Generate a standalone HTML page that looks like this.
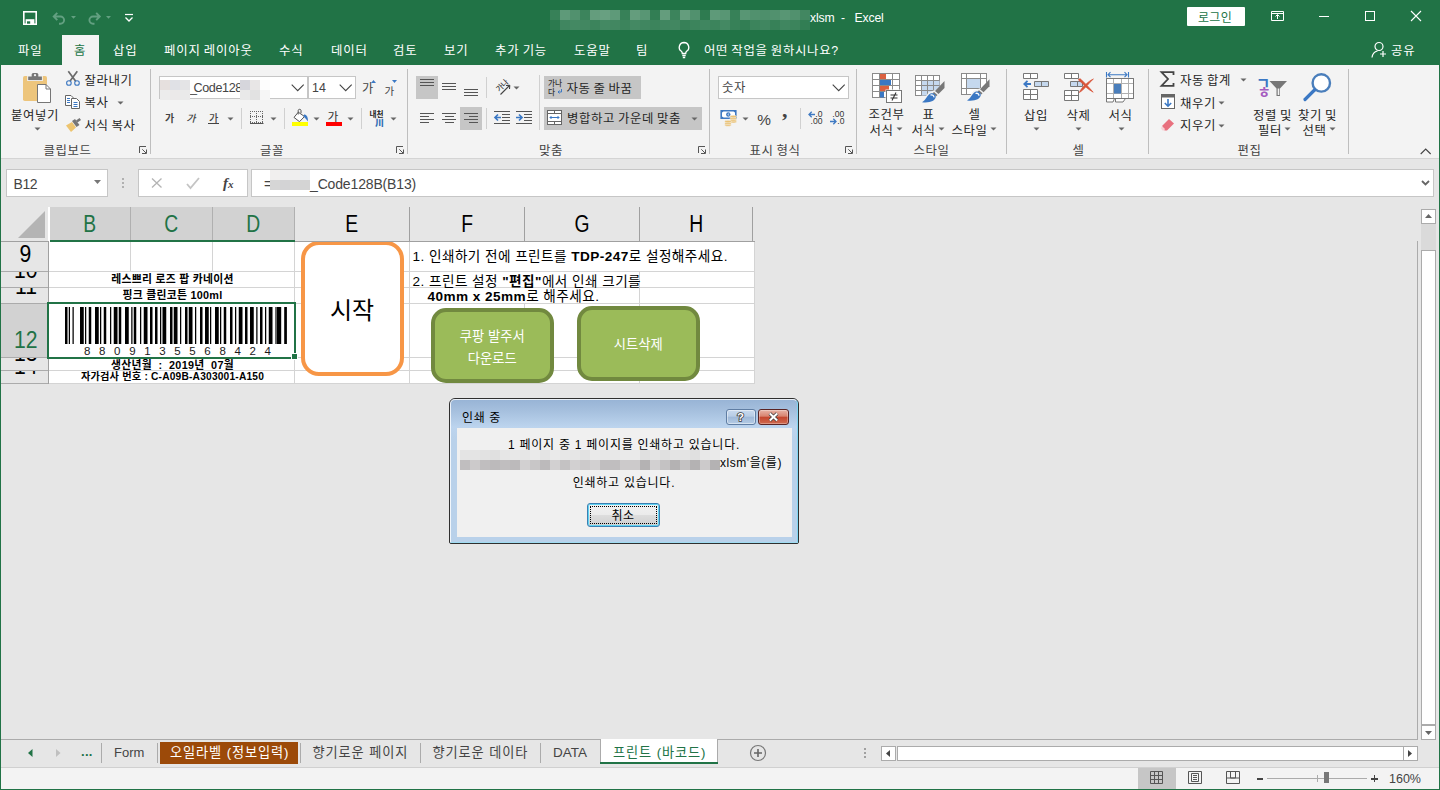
<!DOCTYPE html>
<html lang="ko">
<head>
<meta charset="utf-8">
<title>Excel</title>
<style>
*{box-sizing:border-box;margin:0;padding:0}
html,body{width:1440px;height:790px;overflow:hidden;background:#e6e6e6}
body{position:relative;font-family:"Liberation Sans","Noto Sans CJK KR",sans-serif;font-size:12px;color:#262626}
.abs,.t,svg.i{position:absolute}
svg.i{overflow:visible}
.t{white-space:nowrap}
#title{left:0;top:0;width:1440px;height:65px;background:#217346}
#ribbon{left:1px;top:65px;width:1438px;height:94px;background:#f3f3f3;border-bottom:1px solid #d4d4d4}
.bl{left:0;top:0;width:1px;height:790px;background:#217346}
.br{left:1439px;top:0;width:1px;height:790px;background:#217346}
.bb{left:0;top:789px;width:1440px;height:1px;background:#217346}
.blur i{position:absolute;width:10px;height:10px;display:block}
.inp{background:#fff;border:1px solid #c6c6c6}
.b{font-weight:bold}
</style>
</head>
<body>
<div class="abs" id="title"></div>
<div class="abs" style="left:62px;top:35px;width:37px;height:31px;background:#f3f3f3"></div>
<div class="abs" id="ribbon"></div>
<div class="abs blur" style="left:550px;top:10px;width:260px;height:20px"><i style="left:0px;top:0px;background:rgba(255,255,255,0.10)"></i><i style="left:0px;top:10px;background:rgba(255,255,255,0.05)"></i><i style="left:10px;top:0px;background:rgba(255,255,255,0.28)"></i><i style="left:10px;top:10px;background:rgba(255,255,255,0.14)"></i><i style="left:20px;top:0px;background:rgba(255,255,255,0.22)"></i><i style="left:20px;top:10px;background:rgba(255,255,255,0.16)"></i><i style="left:30px;top:0px;background:rgba(255,255,255,0.12)"></i><i style="left:30px;top:10px;background:rgba(255,255,255,0.15)"></i><i style="left:40px;top:0px;background:rgba(255,255,255,0.30)"></i><i style="left:40px;top:10px;background:rgba(255,255,255,0.12)"></i><i style="left:50px;top:0px;background:rgba(255,255,255,0.32)"></i><i style="left:50px;top:10px;background:rgba(255,255,255,0.16)"></i><i style="left:60px;top:0px;background:rgba(255,255,255,0.28)"></i><i style="left:60px;top:10px;background:rgba(255,255,255,0.15)"></i><i style="left:70px;top:0px;background:rgba(255,255,255,0.10)"></i><i style="left:70px;top:10px;background:rgba(255,255,255,0.12)"></i><i style="left:80px;top:0px;background:rgba(255,255,255,0.30)"></i><i style="left:80px;top:10px;background:rgba(255,255,255,0.16)"></i><i style="left:90px;top:0px;background:rgba(255,255,255,0.25)"></i><i style="left:90px;top:10px;background:rgba(255,255,255,0.14)"></i><i style="left:100px;top:0px;background:rgba(255,255,255,0.08)"></i><i style="left:100px;top:10px;background:rgba(255,255,255,0.12)"></i><i style="left:110px;top:0px;background:rgba(255,255,255,0.30)"></i><i style="left:110px;top:10px;background:rgba(255,255,255,0.14)"></i><i style="left:120px;top:0px;background:rgba(255,255,255,0.12)"></i><i style="left:120px;top:10px;background:rgba(255,255,255,0.15)"></i><i style="left:130px;top:0px;background:rgba(255,255,255,0.30)"></i><i style="left:130px;top:10px;background:rgba(255,255,255,0.10)"></i><i style="left:140px;top:0px;background:rgba(255,255,255,0.22)"></i><i style="left:140px;top:10px;background:rgba(255,255,255,0.12)"></i><i style="left:150px;top:0px;background:rgba(255,255,255,0.06)"></i><i style="left:150px;top:10px;background:rgba(255,255,255,0.14)"></i><i style="left:160px;top:0px;background:rgba(255,255,255,0.28)"></i><i style="left:160px;top:10px;background:rgba(255,255,255,0.12)"></i><i style="left:170px;top:0px;background:rgba(255,255,255,0.25)"></i><i style="left:170px;top:10px;background:rgba(255,255,255,0.16)"></i><i style="left:180px;top:0px;background:rgba(255,255,255,0.10)"></i><i style="left:180px;top:10px;background:rgba(255,255,255,0.10)"></i><i style="left:190px;top:0px;background:rgba(255,255,255,0.25)"></i><i style="left:190px;top:10px;background:rgba(255,255,255,0.08)"></i><i style="left:200px;top:0px;background:rgba(255,255,255,0.22)"></i><i style="left:200px;top:10px;background:rgba(255,255,255,0.12)"></i><i style="left:210px;top:0px;background:rgba(255,255,255,0.20)"></i><i style="left:210px;top:10px;background:rgba(255,255,255,0.14)"></i><i style="left:220px;top:0px;background:rgba(255,255,255,0.22)"></i><i style="left:220px;top:10px;background:rgba(255,255,255,0.10)"></i><i style="left:230px;top:0px;background:rgba(255,255,255,0.25)"></i><i style="left:230px;top:10px;background:rgba(255,255,255,0.14)"></i><i style="left:240px;top:0px;background:rgba(255,255,255,0.22)"></i><i style="left:240px;top:10px;background:rgba(255,255,255,0.12)"></i><i style="left:250px;top:0px;background:rgba(255,255,255,0.15)"></i><i style="left:250px;top:10px;background:rgba(255,255,255,0.08)"></i></div>
<svg class="i" style="left:23px;top:11px" width="14" height="14" viewBox="0 0 14 14"><rect x=".8" y=".8" width="12.400" height="12.400" fill="none" stroke="#fff" stroke-width="1.600"/><rect x="2.600" y="8.200" width="8.800" height="5.500" fill="#fff"/><rect x="4" y="10.300" width="3.200" height="2.400" fill="#217346"/></svg>
<svg class="i" style="left:51px;top:9px" width="30" height="17" viewBox="0 0 30 17"><path d="M3 7.500h6.500a3.600 3.600 0 0 1 0 7.200h-1.500 M6.300 3.800l-3.600 3.700 3.600 3.700" fill="none" stroke="#63a081" stroke-width="1.900"/><path d="M20 7l2.500 2.800 2.500-2.800z" fill="#63a081"/></svg>
<svg class="i" style="left:86px;top:9px" width="30" height="17" viewBox="0 0 30 17"><path d="M13.500 7.500h-6.500a3.600 3.600 0 0 0 0 7.200h1.500 M10.200 3.800l3.600 3.700-3.600 3.700" fill="none" stroke="#63a081" stroke-width="1.900"/><path d="M20 7l2.500 2.800 2.500-2.800z" fill="#63a081"/></svg>
<svg class="i" style="left:123px;top:11px" width="12" height="12" viewBox="0 0 12 12"><path d="M2 3.500h8" stroke="#fff" stroke-width="1.200"/><path d="M2.500 6.500l3.500 3.500 3.500-3.500" fill="none" stroke="#fff" stroke-width="1.300"/></svg>
<div class="t " style="left:810px;top:8.5px;font-size:12.2px;line-height:18px;letter-spacing:-0.15px;word-spacing:-1px;color:#fff;word-spacing:0">xlsm&nbsp; -&nbsp;&nbsp; Excel</div>
<div class="abs" style="left:1187px;top:7px;width:58px;height:19px;background:#fff;border-radius:1px"></div>
<div class="t " style="left:1198px;top:8.5px;font-size:12px;line-height:18px;letter-spacing:0.3px;word-spacing:-1px;color:#217346;">로그인</div>
<svg class="i" style="left:1271px;top:11px" width="13" height="10" viewBox="0 0 13 10"><path d="M.5 .5h12v9h-12z M.5 2.500h12 M6.500 8v-4 M4.500 5.500l2-2 2 2" fill="none" stroke="#fff" stroke-width="1"/></svg>
<div class="abs" style="left:1319px;top:16px;width:10px;height:1px;background:#fff;"></div>
<div class="abs" style="left:1365px;top:11px;width:10px;height:10px;background:transparent;border:1px solid #fff"></div>
<svg class="i" style="left:1410px;top:10px" width="12" height="12" viewBox="0 0 12 12"><path d="M1 1l10 10M11 1l-10 10" stroke="#fff" stroke-width="1.100"/></svg>
<div class="t " style="left:18px;top:42px;font-size:12.4px;line-height:19px;letter-spacing:0.8px;word-spacing:-1px;color:#fff;">파일</div>
<div class="t " style="left:74px;top:42px;font-size:12.4px;line-height:19px;letter-spacing:0.8px;word-spacing:-1px;color:#217346;">홈</div>
<div class="t " style="left:113px;top:42px;font-size:12.4px;line-height:19px;letter-spacing:0.8px;word-spacing:-1px;color:#fff;">삽입</div>
<div class="t " style="left:164px;top:42px;font-size:12.4px;line-height:19px;letter-spacing:0.8px;word-spacing:-1px;color:#fff;">페이지 레이아웃</div>
<div class="t " style="left:279px;top:42px;font-size:12.4px;line-height:19px;letter-spacing:0.8px;word-spacing:-1px;color:#fff;">수식</div>
<div class="t " style="left:331px;top:42px;font-size:12.4px;line-height:19px;letter-spacing:0.8px;word-spacing:-1px;color:#fff;">데이터</div>
<div class="t " style="left:393px;top:42px;font-size:12.4px;line-height:19px;letter-spacing:0.8px;word-spacing:-1px;color:#fff;">검토</div>
<div class="t " style="left:444px;top:42px;font-size:12.4px;line-height:19px;letter-spacing:0.8px;word-spacing:-1px;color:#fff;">보기</div>
<div class="t " style="left:495px;top:42px;font-size:12.4px;line-height:19px;letter-spacing:0.8px;word-spacing:-1px;color:#fff;">추가 기능</div>
<div class="t " style="left:574px;top:42px;font-size:12.4px;line-height:19px;letter-spacing:0.8px;word-spacing:-1px;color:#fff;">도움말</div>
<div class="t " style="left:636px;top:42px;font-size:12.4px;line-height:19px;letter-spacing:0.8px;word-spacing:-1px;color:#fff;">팀</div>
<div class="t " style="left:704px;top:42px;font-size:12.4px;line-height:19px;letter-spacing:0.7px;word-spacing:-1px;color:#fff;">어떤 작업을 원하시나요?</div>
<div class="t " style="left:1391px;top:42px;font-size:12.4px;line-height:19px;letter-spacing:0.8px;word-spacing:-1px;color:#fff;">공유</div>
<svg class="i" style="left:677px;top:41px" width="14" height="19" viewBox="0 0 14 19"><path d="M7 1.500a4.800 4.800 0 0 1 2.600 8.800c-.6.500-.9 1.200-.9 2.200h-3.400c0-1-.3-1.700-.9-2.200a4.800 4.800 0 0 1 2.600-8.800z M5.300 14.500h3.400 M5.800 16.500h2.400" fill="none" stroke="#fff" stroke-width="1.350"/></svg>
<svg class="i" style="left:1371px;top:41px" width="17" height="18" viewBox="0 0 17 18"><circle cx="8" cy="5.500" r="4" fill="none" stroke="#fff" stroke-width="1.200"/><path d="M1 16.500c.5-4 3-6 5.500-6.500" fill="none" stroke="#fff" stroke-width="1.200"/><path d="M12 10v6M9 13h6" stroke="#fff" stroke-width="1.200"/></svg>
<div class="abs" style="left:150px;top:69px;width:1px;height:85px;background:#bebebe;"></div>
<div class="abs" style="left:407px;top:69px;width:1px;height:85px;background:#bebebe;"></div>
<div class="abs" style="left:709px;top:69px;width:1px;height:85px;background:#bebebe;"></div>
<div class="abs" style="left:856px;top:69px;width:1px;height:85px;background:#bebebe;"></div>
<div class="abs" style="left:1006px;top:69px;width:1px;height:85px;background:#bebebe;"></div>
<div class="abs" style="left:1148px;top:69px;width:1px;height:85px;background:#bebebe;"></div>
<div class="abs" style="left:1348px;top:69px;width:1px;height:85px;background:#bebebe;"></div>
<svg class="i" style="left:22px;top:72px" width="30" height="32" viewBox="0 0 30 32"><rect x="1" y="4" width="24" height="25" rx="1.800" fill="#edc57c"/><rect x="5.200" y="3.500" width="15.600" height="5.500" fill="#f3f3f3"/><rect x="6.200" y="4.500" width="13.700" height="3.600" fill="#767676"/><path d="M9.700 5v-2.400a1.500 1.500 0 0 1 1.500 -1.500h3.600a1.500 1.500 0 0 1 1.500 1.500v2.400z" fill="#767676"/><circle cx="13" cy="3.200" r="1.100" fill="#f3f3f3"/><path d="M15.500 12.500h8.500l4.500 4.500v13.500h-13z" fill="#fff" stroke="#767676" stroke-width="1"/><path d="M24 12.500v4.500h4.500" fill="none" stroke="#767676" stroke-width="1"/></svg>
<div class="t " style="left:11px;top:107px;font-size:12.4px;line-height:19px;letter-spacing:0.6px;word-spacing:-1px;color:#262626;">붙여넣기</div>
<svg class="i" style="left:34px;top:126.5px" width="7" height="4" viewBox="0 0 7 4"><path d="M0.500 0.500h6l-3 3z" fill="#666"/></svg>
<svg class="i" style="left:65px;top:70px" width="16" height="17" viewBox="0 0 16 17"><path d="M3.300 1.300l7.400 10 M12.300 1.300l-7.400 10" stroke="#6a6a6a" stroke-width="1.700" fill="none"/><circle cx="3.900" cy="13" r="2.300" fill="none" stroke="#3e79c2" stroke-width="1.100"/><circle cx="12" cy="13" r="2.300" fill="none" stroke="#3e79c2" stroke-width="1.100"/></svg>
<div class="t " style="left:84.5px;top:72px;font-size:12.4px;line-height:19px;letter-spacing:0.6px;word-spacing:-1px;color:#262626;">잘라내기</div>
<svg class="i" style="left:65px;top:95px" width="16" height="14" viewBox="0 0 16 14"><path d="M.5 .5h5.500l2.500 2.500v7.500h-8z" fill="#fff" stroke="#666" stroke-width="1"/><path d="M6.500 3.500h5l3 3v7h-8z" fill="#fff" stroke="#666" stroke-width="1"/><path d="M2 3.500h3M2 5.500h3M2 7.500h3 M8.500 7.500h4M8.500 9.500h4M8.500 11.500h4" stroke="#3b78c4" stroke-width="1"/></svg>
<div class="t " style="left:84.5px;top:94px;font-size:12.4px;line-height:19px;letter-spacing:0.6px;word-spacing:-1px;color:#262626;">복사</div>
<svg class="i" style="left:117px;top:100.5px" width="7" height="4" viewBox="0 0 7 4"><path d="M0.500 0.500h6l-3 3z" fill="#666"/></svg>
<svg class="i" style="left:65px;top:117px" width="17" height="16" viewBox="0 0 17 16"><path d="M1 8.500l6-3.500 4 5.500-5 4.500z" fill="#edc46f"/><path d="M7 4l3-2 4.500 6-3 2z" fill="#767676"/><path d="M11 3.500l3.500-2.500 1.500 2-3.500 2.500z" fill="#767676"/></svg>
<div class="t " style="left:84.5px;top:117px;font-size:12.4px;line-height:19px;letter-spacing:0.6px;word-spacing:-1px;color:#262626;">서식 복사</div>
<div class="t " style="left:43.5px;top:142px;font-size:12.4px;line-height:19px;letter-spacing:0.6px;word-spacing:-1px;color:#444;">클립보드</div>
<svg class="i" style="left:139px;top:146px" width="8" height="8" viewBox="0 0 8 8"><path d="M.5 7v-6.500h6.500 M3.300 3.300l3.700 3.700 M7.500 3.500v4h-4.500" fill="none" stroke="#555" stroke-width="1"/></svg>
<div class="abs" style="left:159px;top:76px;width:149px;height:23px;background:#fff;border:1px solid #c6c6c6"></div>
<div class="abs" style="left:308px;top:76px;width:48px;height:23px;background:#fff;border:1px solid #c6c6c6"></div>
<div class="abs blur" style="left:160px;top:80px;width:30px;height:20px"><i style="left:0;top:0;background:#e6e0de"></i><i style="left:10px;top:0;background:#e0e1e6"></i><i style="left:20px;top:0;background:#e4e4e6"></i><i style="left:0;top:10px;background:#ececec"></i><i style="left:10px;top:10px;background:#ebe9e9"></i><i style="left:20px;top:10px;background:#eaeaea"></i></div>
<div class="t" style="left:190px;top:78px;width:50px;height:21px;overflow:hidden;font-size:12.6px;letter-spacing:-.4px;line-height:21px;color:#444"><span style="letter-spacing:-3.500px">_</span>Code128</div>
<div class="abs blur" style="left:240px;top:80px;width:30px;height:20px"><i style="left:0;top:0;background:#d6d6dc"></i><i style="left:10px;top:0;background:#e8e6e6"></i><i style="left:20px;top:0;background:#fdfdfd"></i><i style="left:0;top:10px;background:#e9e9e9"></i><i style="left:10px;top:10px;background:#e2e2e2"></i><i style="left:20px;top:10px;background:#f6f6f6"></i></div>
<svg class="i" style="left:291px;top:84px" width="14" height="8" viewBox="0 0 14 8"><path d="M.7 .7l6 6 6-6" fill="none" stroke="#444" stroke-width="1.100"/></svg>
<div class="t " style="left:312px;top:78.5px;font-size:12.4px;line-height:19px;letter-spacing:0px;word-spacing:-1px;color:#444;">14</div>
<svg class="i" style="left:338.5px;top:84px" width="14" height="8" viewBox="0 0 14 8"><path d="M.7 .7l6 6 6-6" fill="none" stroke="#444" stroke-width="1.100"/></svg>
<div class="t " style="left:362px;top:80px;font-size:12.2px;line-height:18px;letter-spacing:0px;word-spacing:-1px;color:#444;">가</div>
<svg class="i" style="left:370.5px;top:80px" width="5" height="3" viewBox="0 0 5 3"><path d="M0 3l2.500-3 2.500 3z" fill="#3b78c4"/></svg>
<div class="t " style="left:384.5px;top:82.5px;font-size:10.5px;line-height:16px;letter-spacing:0px;word-spacing:-1px;color:#444;">가</div>
<svg class="i" style="left:392px;top:80px" width="5" height="3" viewBox="0 0 5 3"><path d="M0 0l2.500 3 2.500-3z" fill="#3b78c4"/></svg>
<div class="t " style="left:165px;top:110.8px;font-size:10px;line-height:15px;letter-spacing:0px;word-spacing:-1px;color:#444;font-weight:bold">가</div>
<div class="t " style="left:186.8px;top:110.8px;font-size:10px;line-height:15px;letter-spacing:0px;word-spacing:-1px;color:#444;font-weight:500;transform:skewX(-14deg)">가</div>
<div class="t " style="left:209px;top:110.5px;font-size:10px;line-height:15px;letter-spacing:0px;word-spacing:-1px;color:#444;font-weight:500">가</div>
<div class="abs" style="left:208px;top:123px;width:11px;height:1px;background:#444;"></div>
<svg class="i" style="left:227px;top:116.5px" width="7" height="4" viewBox="0 0 7 4"><path d="M0.500 0.500h6l-3 3z" fill="#666"/></svg>
<div class="abs" style="left:241px;top:108px;width:1px;height:21px;background:#d0d0d0;"></div>
<svg class="i" style="left:250px;top:111px" width="14" height="13" viewBox="0 0 14 13"><path d="M0 .5h13M0 5.500h13M0 11.500h13M.5 0v12M6.500 0v12M12.500 0v12" stroke="#666" stroke-width="1" stroke-dasharray="1 1" fill="none"/><path d="M0 12.500h13.500" stroke="#555" stroke-width="1"/></svg>
<svg class="i" style="left:270px;top:116.5px" width="7" height="4" viewBox="0 0 7 4"><path d="M0.500 0.500h6l-3 3z" fill="#666"/></svg>
<div class="abs" style="left:284px;top:108px;width:1px;height:21px;background:#d0d0d0;"></div>
<svg class="i" style="left:292px;top:108px" width="17" height="14" viewBox="0 0 17 14"><path d="M6.300 4.200l6.200 4.300-5 5.200-5.500-4.300z" fill="#fff" stroke="#555" stroke-width="1"/><path d="M6.200 6.500v-4c0-1.600 2.800-1.600 2.800 0v2.700" fill="none" stroke="#555" stroke-width="1"/><path d="M12.500 6.200c2.600 .8 3.800 3.500 3.400 7.300c-1.200-1.600-2.300-3.300-4.600-5.300z" fill="#3b78c4"/></svg>
<div class="abs" style="left:292px;top:122px;width:16px;height:4px;background:#ffff00;"></div>
<svg class="i" style="left:313px;top:116.5px" width="7" height="4" viewBox="0 0 7 4"><path d="M0.500 0.500h6l-3 3z" fill="#666"/></svg>
<div class="t " style="left:327.5px;top:107.5px;font-size:11.8px;line-height:18px;letter-spacing:0px;word-spacing:-1px;color:#333;">가</div>
<div class="abs" style="left:326px;top:122px;width:16px;height:4px;background:#ff0000;"></div>
<svg class="i" style="left:347px;top:116.5px" width="7" height="4" viewBox="0 0 7 4"><path d="M0.500 0.500h6l-3 3z" fill="#666"/></svg>
<div class="abs" style="left:361px;top:108px;width:1px;height:21px;background:#d0d0d0;"></div>
<div class="t " style="left:369.5px;top:108.5px;font-size:7.6px;line-height:11px;letter-spacing:0px;word-spacing:-1px;color:#222;font-weight:bold">내천</div>
<div class="t " style="left:375px;top:116px;font-size:9px;line-height:14px;letter-spacing:0px;word-spacing:-1px;color:#2e6db4;font-weight:900">川</div>
<svg class="i" style="left:390px;top:116.5px" width="7" height="4" viewBox="0 0 7 4"><path d="M0.500 0.500h6l-3 3z" fill="#666"/></svg>
<div class="t " style="left:260px;top:142px;font-size:12.4px;line-height:19px;letter-spacing:0.6px;word-spacing:-1px;color:#444;">글꼴</div>
<svg class="i" style="left:396px;top:146px" width="8" height="8" viewBox="0 0 8 8"><path d="M.5 7v-6.500h6.500 M3.300 3.300l3.700 3.700 M7.500 3.500v4h-4.500" fill="none" stroke="#555" stroke-width="1"/></svg>
<div class="abs" style="left:416px;top:76px;width:22px;height:23px;background:#c6c6c6;"></div>
<div class="abs" style="left:460px;top:107px;width:22px;height:23px;background:#c6c6c6;"></div>
<div class="abs" style="left:544px;top:76px;width:97px;height:23px;background:#c6c6c6;"></div>
<div class="abs" style="left:544px;top:107px;width:158px;height:23px;background:#c6c6c6;"></div>
<div class="abs" style="left:420px;top:79px;width:14px;height:1px;background:#555;"></div><div class="abs" style="left:420px;top:82px;width:14px;height:1px;background:#555;"></div><div class="abs" style="left:420px;top:85px;width:14px;height:1px;background:#555;"></div>
<div class="abs" style="left:442px;top:83px;width:14px;height:1px;background:#555;"></div><div class="abs" style="left:442px;top:86px;width:14px;height:1px;background:#555;"></div><div class="abs" style="left:442px;top:89px;width:14px;height:1px;background:#555;"></div>
<div class="abs" style="left:464px;top:89px;width:14px;height:1px;background:#555;"></div><div class="abs" style="left:464px;top:92px;width:14px;height:1px;background:#555;"></div><div class="abs" style="left:464px;top:95px;width:14px;height:1px;background:#555;"></div>
<div class="abs" style="left:420px;top:113px;width:14px;height:1px;background:#555;"></div><div class="abs" style="left:420px;top:116px;width:9px;height:1px;background:#555;"></div><div class="abs" style="left:420px;top:119px;width:14px;height:1px;background:#555;"></div><div class="abs" style="left:420px;top:122px;width:9px;height:1px;background:#555;"></div>
<div class="abs" style="left:442.0px;top:113px;width:14px;height:1px;background:#555;"></div><div class="abs" style="left:444.5px;top:116px;width:9px;height:1px;background:#555;"></div><div class="abs" style="left:442.0px;top:119px;width:14px;height:1px;background:#555;"></div><div class="abs" style="left:444.5px;top:122px;width:9px;height:1px;background:#555;"></div>
<div class="abs" style="left:464px;top:113px;width:14px;height:1px;background:#555;"></div><div class="abs" style="left:469px;top:116px;width:9px;height:1px;background:#555;"></div><div class="abs" style="left:464px;top:119px;width:14px;height:1px;background:#555;"></div><div class="abs" style="left:469px;top:122px;width:9px;height:1px;background:#555;"></div>
<div class="abs" style="left:486px;top:77px;width:1px;height:21px;background:#d0d0d0;"></div>
<div class="abs" style="left:486px;top:108px;width:1px;height:21px;background:#d0d0d0;"></div>
<div class="abs" style="left:539px;top:75px;width:1px;height:55px;background:#d0d0d0;"></div>
<svg class="i" style="left:493px;top:78px" width="19" height="18" viewBox="0 0 19 18"><g transform="rotate(-45 9 8)"><text x="2.500" y="10.500" font-size="7.600" font-weight="500" fill="#333" font-family="Liberation Sans,Noto Sans CJK KR,sans-serif">가나</text></g><path d="M7.500 16.500l9-9 M16.800 7.200l-3.800 .3 M16.800 7.200l-.3 3.800" stroke="#444" stroke-width="1.100" fill="none"/></svg>
<svg class="i" style="left:513px;top:85.5px" width="7" height="4" viewBox="0 0 7 4"><path d="M0.500 0.500h6l-3 3z" fill="#666"/></svg>
<svg class="i" style="left:494px;top:111px" width="16" height="13" viewBox="0 0 16 13"><path d="M0 .5h16M0 12.500h16M8 3.500h8M8 6.500h8M8 9.500h8" stroke="#555" stroke-width="1"/><path d="M7 6.500h-5.500 M4 3.500l-3 3 3 3" stroke="#3b78c4" stroke-width="1.700" fill="none"/></svg>
<svg class="i" style="left:516px;top:111px" width="16" height="13" viewBox="0 0 16 13"><path d="M0 .5h16M0 12.500h16M8 3.500h8M8 6.500h8M8 9.500h8" stroke="#555" stroke-width="1"/><path d="M0 6.500h5.500 M3 3.500l3 3-3 3" stroke="#3b78c4" stroke-width="1.700" fill="none"/></svg>
<div class="t " style="left:548px;top:78.1px;font-size:7.6px;line-height:11px;letter-spacing:0px;word-spacing:-1px;color:#333;font-weight:500">가나</div>
<div class="t " style="left:548px;top:87.3px;font-size:7.6px;line-height:11px;letter-spacing:0px;word-spacing:-1px;color:#333;font-weight:500">다</div>
<svg class="i" style="left:556.5px;top:88.5px" width="6" height="5" viewBox="0 0 6 5"><path d="M4.500 0v3h-3.500 M2.500 1.500l-1.500 1.500 1.500 1.500" stroke="#3b78c4" stroke-width="1" fill="none"/></svg>
<div class="t " style="left:566.5px;top:79.5px;font-size:12.4px;line-height:19px;letter-spacing:0.6px;word-spacing:-1px;color:#262626;">자동 줄 바꿈</div>
<svg class="i" style="left:547px;top:110px" width="15" height="15" viewBox="0 0 15 15"><rect x=".5" y=".5" width="14" height="14" fill="#fff" stroke="#666"/><path d="M.5 3.500h14M.5 11.500h14M7.500 .5v3M7.500 11.500v3" stroke="#666" stroke-width="1"/><path d="M3 7.500h9 M4.500 6l-1.500 1.500 1.500 1.500 M10.500 6l1.500 1.500-1.500 1.500" stroke="#3b78c4" stroke-width="1" fill="none"/></svg>
<div class="t " style="left:567px;top:110px;font-size:12.4px;line-height:19px;letter-spacing:0.6px;word-spacing:-1px;color:#262626;">병합하고 가운데 맞춤</div>
<svg class="i" style="left:691px;top:116.5px" width="7" height="4" viewBox="0 0 7 4"><path d="M0.500 0.500h6l-3 3z" fill="#666"/></svg>
<div class="t " style="left:539px;top:142px;font-size:12.4px;line-height:19px;letter-spacing:0.6px;word-spacing:-1px;color:#444;">맞춤</div>
<svg class="i" style="left:698px;top:146px" width="8" height="8" viewBox="0 0 8 8"><path d="M.5 7v-6.500h6.500 M3.300 3.300l3.700 3.700 M7.500 3.500v4h-4.500" fill="none" stroke="#555" stroke-width="1"/></svg>
<div class="abs" style="left:718px;top:76px;width:131px;height:23px;background:#fff;border:1px solid #c6c6c6"></div>
<div class="t " style="left:722px;top:79px;font-size:12.4px;line-height:19px;letter-spacing:0.6px;word-spacing:-1px;color:#444;">숫자</div>
<svg class="i" style="left:832px;top:84px" width="14" height="8" viewBox="0 0 14 8"><path d="M.7 .7l6 6 6-6" fill="none" stroke="#444" stroke-width="1.100"/></svg>
<svg class="i" style="left:720px;top:109px" width="18" height="18" viewBox="0 0 18 18"><path d="M1.200 1.700h14.600v7.600h-14.600z" fill="#fff" stroke="#3e79c2" stroke-width="1.600"/><path d="M1 1.500h2.500c0 1.200-1 2.200-2.500 2.200z M16 1.500h-2.500c0 1.200 1 2.200 2.500 2.200z M1 9.500h2.500c0-1.200-1-2.200-2.500-2.200z" fill="#3e79c2"/><circle cx="8.300" cy="5.500" r="2.200" fill="#3e79c2"/><path d="M8.800 4.500a1.300 1.300 0 0 0 0 2" stroke="#fff" stroke-width=".9" fill="none"/><ellipse cx="13.3" cy="12.7" rx="3.300" ry="1.250" fill="#ebc274" stroke="#f3f3f3" stroke-width=".5"/><ellipse cx="13.3" cy="11" rx="3.300" ry="1.250" fill="#ebc274" stroke="#f3f3f3" stroke-width=".5"/><ellipse cx="13.3" cy="9.3" rx="3.300" ry="1.250" fill="#ebc274" stroke="#f3f3f3" stroke-width=".5"/><ellipse cx="13.3" cy="7.6" rx="3.300" ry="1.250" fill="#ebc274" stroke="#f3f3f3" stroke-width=".5"/><ellipse cx="8" cy="16" rx="3.300" ry="1.250" fill="#ebc274" stroke="#f3f3f3" stroke-width=".5"/><ellipse cx="8" cy="14.3" rx="3.300" ry="1.250" fill="#ebc274" stroke="#f3f3f3" stroke-width=".5"/><ellipse cx="8" cy="12.6" rx="3.300" ry="1.250" fill="#ebc274" stroke="#f3f3f3" stroke-width=".5"/></svg>
<svg class="i" style="left:742px;top:116.5px" width="7" height="4" viewBox="0 0 7 4"><path d="M0.500 0.500h6l-3 3z" fill="#666"/></svg>
<div class="t " style="left:757.3px;top:107.5px;font-size:15.4px;line-height:23px;letter-spacing:0px;word-spacing:-1px;color:#444;">%</div>
<div class="t " style="left:782px;top:93px;font-size:22px;line-height:33px;letter-spacing:0px;word-spacing:-1px;color:#444;font-weight:bold;font-family:Liberation Serif,serif">,</div>
<div class="abs" style="left:800px;top:108px;width:1px;height:21px;background:#d0d0d0;"></div>
<svg class="i" style="left:808px;top:110px" width="16" height="15" viewBox="0 0 16 15"><path d="M1 4.500h6 M3.700 1.800l-2.700 2.700 2.700 2.700" stroke="#3e79c2" stroke-width="1.300" fill="none"/><text x="7.300" y="7" font-size="8.600" fill="#333" font-family="Liberation Sans,sans-serif">.0</text><text x="2.500" y="14.300" font-size="8.600" fill="#333" font-family="Liberation Sans,sans-serif">.00</text></svg>
<svg class="i" style="left:829px;top:110px" width="16" height="15" viewBox="0 0 16 15"><text x="3.300" y="7" font-size="8.600" fill="#333" font-family="Liberation Sans,sans-serif">.00</text><path d="M1 11.500h6 M4.300 8.800l2.700 2.700-2.700 2.700" stroke="#3e79c2" stroke-width="1.300" fill="none"/><text x="8.300" y="14.300" font-size="8.600" fill="#333" font-family="Liberation Sans,sans-serif">.0</text></svg>
<div class="t " style="left:749.5px;top:142px;font-size:12.4px;line-height:19px;letter-spacing:0.6px;word-spacing:-1px;color:#444;">표시 형식</div>
<svg class="i" style="left:845px;top:146px" width="8" height="8" viewBox="0 0 8 8"><path d="M.5 7v-6.500h6.500 M3.300 3.300l3.700 3.700 M7.500 3.500v4h-4.500" fill="none" stroke="#555" stroke-width="1"/></svg>
<svg class="i" style="left:872px;top:73px" width="31" height="30" viewBox="0 0 31 30"><rect x=".5" y=".5" width="27" height="24" fill="#fff" stroke="#8a8a8a"/><path d="M.5 6.500h27M.5 12.500h27M.5 18.500h27M7.500 .5v24M20.500 .5v24" stroke="#8a8a8a" stroke-width="1"/><rect x="8" y="1" width="6" height="5" fill="#dc6141"/><rect x="8" y="7" width="11" height="5" fill="#3b78c4"/><rect x="8" y="13" width="9" height="5" fill="#dc6141"/><rect x="8" y="19" width="4" height="5.500" fill="#3b78c4"/><rect x="13.500" y="16.500" width="17" height="13" fill="#f3f3f3" stroke="none"/><rect x="14.500" y="17.500" width="15" height="12" fill="#fff" stroke="#777"/><path d="M18.500 22h7M18.500 25h7M24 19.500l-4 8" stroke="#333" stroke-width="1.100"/></svg>
<div class="t " style="left:868.5px;top:106px;font-size:12.4px;line-height:19px;letter-spacing:0.6px;word-spacing:-1px;color:#262626;">조건부</div>
<div class="t " style="left:869.5px;top:122px;font-size:12.4px;line-height:19px;letter-spacing:0.6px;word-spacing:-1px;color:#262626;">서식</div>
<svg class="i" style="left:896px;top:126.5px" width="7" height="4" viewBox="0 0 7 4"><path d="M0.500 0.500h6l-3 3z" fill="#666"/></svg>
<svg class="i" style="left:915px;top:75px" width="32" height="29" viewBox="0 0 32 29"><rect x=".5" y=".5" width="24" height="20" fill="#fff" stroke="#8a8a8a"/><rect x="6.500" y="5.500" width="18" height="15" fill="#c5d8ee"/><path d="M.5 5.500h24M.5 10.500h24M.5 15.500h24M6.500 .5v20M12.500 .5v20M18.500 .5v20" stroke="#8a8a8a" stroke-width="1"/><g transform="translate(0 0)"><path d="M6 29l2-3.500 5.500-8 8-3 10-10 1 10-5.500 9-6.500 4.500z" fill="#f3f3f3"/><path d="M29.500 6v7l-6 6-3.500-3z" fill="#777"/><path d="M19 17l3.500 3-1.300 1.300-3.500-3z" fill="#777"/><path d="M7 27.300C11 25 12 20.500 15 18.800C18 17.300 21.300 19.500 20.700 22.300C20 25.800 15 28.300 7 27.300Z" fill="#3b78c4"/><path d="M15.500 20.200c1.800-.8 3.600 .4 3.400 2.200" stroke="#fff" stroke-width="1.300" fill="none"/></g></svg>
<div class="t " style="left:922.5px;top:106px;font-size:12.4px;line-height:19px;letter-spacing:0.6px;word-spacing:-1px;color:#262626;">표</div>
<div class="t " style="left:911.5px;top:122px;font-size:12.4px;line-height:19px;letter-spacing:0.6px;word-spacing:-1px;color:#262626;">서식</div>
<svg class="i" style="left:938px;top:126.5px" width="7" height="4" viewBox="0 0 7 4"><path d="M0.500 0.500h6l-3 3z" fill="#666"/></svg>
<svg class="i" style="left:961px;top:73px" width="32" height="30" viewBox="0 0 32 30"><rect x=".5" y=".5" width="25" height="21" fill="#fff" stroke="#8a8a8a"/><path d="M.5 5.500h25M.5 15.500h25M5.500 .5v21M19.500 .5v21" stroke="#8a8a8a" stroke-width="1"/><rect x="6" y="6" width="13" height="9" fill="#c5d8ee"/><g transform="translate(-1 0.3)"><path d="M6 29l2-3.500 5.500-8 8-3 10-10 1 10-5.500 9-6.500 4.500z" fill="#f3f3f3"/><path d="M29.500 6v7l-6 6-3.500-3z" fill="#777"/><path d="M19 17l3.500 3-1.300 1.300-3.500-3z" fill="#777"/><path d="M7 27.300C11 25 12 20.500 15 18.800C18 17.300 21.300 19.500 20.700 22.300C20 25.800 15 28.300 7 27.300Z" fill="#3b78c4"/><path d="M15.500 20.200c1.800-.8 3.600 .4 3.400 2.200" stroke="#fff" stroke-width="1.300" fill="none"/></g></svg>
<div class="t " style="left:968.5px;top:106px;font-size:12.4px;line-height:19px;letter-spacing:0.6px;word-spacing:-1px;color:#262626;">셀</div>
<div class="t " style="left:951.5px;top:122px;font-size:12.4px;line-height:19px;letter-spacing:0.6px;word-spacing:-1px;color:#262626;">스타일</div>
<svg class="i" style="left:990px;top:126.5px" width="7" height="4" viewBox="0 0 7 4"><path d="M0.500 0.500h6l-3 3z" fill="#666"/></svg>
<div class="t " style="left:913.5px;top:142px;font-size:12.4px;line-height:19px;letter-spacing:0.6px;word-spacing:-1px;color:#444;">스타일</div>
<svg class="i" style="left:1022px;top:72px" width="28" height="29" viewBox="0 0 28 29"><path d="M1.500 1.500h14v5h-14z M8.500 1.500v5" fill="#fff" stroke="#777"/><path d="M1.500 17.500h14v10h-14z M8.500 17.500v10 M1.500 22.500h14" fill="#fff" stroke="#777"/><path d="M12.500 9.500h14v5h-14z M19.500 9.500v5" fill="#c5d8ee" stroke="#777"/><path d="M2.500 12h6.500 M5.500 8.800l-3.200 3.200 3.200 3.200" stroke="#3b78c4" stroke-width="1.800" fill="none"/></svg>
<div class="t " style="left:1024px;top:106.5px;font-size:12.4px;line-height:19px;letter-spacing:0.6px;word-spacing:-1px;color:#262626;">삽입</div>
<svg class="i" style="left:1033px;top:126.5px" width="7" height="4" viewBox="0 0 7 4"><path d="M0.500 0.500h6l-3 3z" fill="#666"/></svg>
<svg class="i" style="left:1063px;top:72px" width="32" height="30" viewBox="0 0 32 30"><path d="M1.500 1.500h14v5h-14z M8.500 1.500v5" fill="#fff" stroke="#777"/><path d="M1.500 18.500h14v10h-14z M8.500 18.500v10 M1.500 23.500h14" fill="#fff" stroke="#777"/><path d="M7.500 9.500h12v5h-12z M14.500 9.500v5" fill="#c5d8ee" stroke="#777"/><path d="M15.300 7.800c.8-1 1.800-1.300 2.600-.5l5 5c2-2 4.500-4 7.500-5.300c-2.300 2-4.500 4.200-6.200 6.600c1.600 1.800 3.800 4.200 6 6.600c-2.800-1.500-5.200-3.300-7.400-5.200c-2 2-4.300 4.300-6.500 5.500c1-2.300 3-4.800 5-7.300c-2-1.800-4-3.700-6-5.400z" fill="#d8553a" stroke="#d8553a" stroke-width=".7"/></svg>
<div class="t " style="left:1066.5px;top:106.5px;font-size:12.4px;line-height:19px;letter-spacing:0.6px;word-spacing:-1px;color:#262626;">삭제</div>
<svg class="i" style="left:1075px;top:126.5px" width="7" height="4" viewBox="0 0 7 4"><path d="M0.500 0.500h6l-3 3z" fill="#666"/></svg>
<svg class="i" style="left:1105px;top:71px" width="30" height="32" viewBox="0 0 30 32"><path d="M1.500 1v5.500 M23.500 1v5.500 M3 3.700h19 M5.500 1.200l-2.500 2.500 2.500 2.500 M19.500 1.200l2.500 2.500-2.500 2.500" stroke="#3b78c4" stroke-width="1.100" fill="none"/><path d="M1.500 27.500v3.500h6.500l1.500-3.500 M10.500 27.500v3.500h7.500l2.500-3.500" fill="#fff" stroke="#777"/><path d="M1.500 7.500h27v20h-27z" fill="#fff" stroke="#777"/><path d="M1.500 12.500h27M1.500 22.500h27M8.500 7.500v20M16.500 7.500v20M23.500 7.500v20" stroke="#b0b0b0" stroke-width="1"/><path d="M1.500 7.500h27v20h-27z" fill="none" stroke="#777"/><rect x="9" y="13" width="7" height="9.500" fill="#4a7ebb"/></svg>
<div class="t " style="left:1108.5px;top:106.5px;font-size:12.4px;line-height:19px;letter-spacing:0.6px;word-spacing:-1px;color:#262626;">서식</div>
<svg class="i" style="left:1118px;top:126.5px" width="7" height="4" viewBox="0 0 7 4"><path d="M0.500 0.500h6l-3 3z" fill="#666"/></svg>
<div class="t " style="left:1072.5px;top:142px;font-size:12.4px;line-height:19px;letter-spacing:0.6px;word-spacing:-1px;color:#444;">셀</div>
<svg class="i" style="left:1160px;top:71px" width="16" height="16" viewBox="0 0 16 16"><path d="M13.500 4v-2.800h-12l6.500 6.800-6.500 6.800h12v-2.800" fill="none" stroke="#444" stroke-width="1.800"/></svg>
<div class="t " style="left:1180px;top:71.5px;font-size:12.4px;line-height:19px;letter-spacing:0.6px;word-spacing:-1px;color:#262626;">자동 합계</div>
<svg class="i" style="left:1240px;top:77.5px" width="7" height="4" viewBox="0 0 7 4"><path d="M0.500 0.500h6l-3 3z" fill="#666"/></svg>
<svg class="i" style="left:1161px;top:94px" width="14" height="15" viewBox="0 0 14 15"><rect x=".5" y=".5" width="13" height="14" fill="#fff" stroke="#666"/><rect x=".5" y=".5" width="13" height="3" fill="#666"/><path d="M7 5v7 M3.800 9l3.200 3.200 3.200-3.200" stroke="#3b78c4" stroke-width="1.600" fill="none"/></svg>
<div class="t " style="left:1180px;top:94.5px;font-size:12.4px;line-height:19px;letter-spacing:0.6px;word-spacing:-1px;color:#262626;">채우기</div>
<svg class="i" style="left:1218px;top:100.5px" width="7" height="4" viewBox="0 0 7 4"><path d="M0.500 0.500h6l-3 3z" fill="#666"/></svg>
<svg class="i" style="left:1161px;top:118px" width="14" height="13" viewBox="0 0 14 13"><path d="M1 8l7-7 5 4.500-7 7h-2.500z" fill="#e8707e"/><path d="M1 8l3 3-1 1.500h-1.500l-1.500-2z" fill="#f7d2d6"/></svg>
<div class="t " style="left:1180px;top:117px;font-size:12.4px;line-height:19px;letter-spacing:0.6px;word-spacing:-1px;color:#262626;">지우기</div>
<svg class="i" style="left:1218px;top:123.5px" width="7" height="4" viewBox="0 0 7 4"><path d="M0.500 0.500h6l-3 3z" fill="#666"/></svg>
<svg class="i" style="left:1257px;top:76px" width="31" height="22" viewBox="0 0 31 22"><text x="-1" y="12.500" font-size="15.500" font-weight="bold" fill="#3b78c4" font-family="Liberation Sans,Noto Sans CJK KR,sans-serif">ㄱ</text><text x="0.500" y="22" font-size="14.500" font-weight="bold" fill="#a55bc0" font-family="Liberation Sans,Noto Sans CJK KR,sans-serif">ㅎ</text><path d="M12.500 5h17.500l-7 7.500v7.500h-3.500v-7.500z" fill="#777"/><path d="M20.700 12.500h1.600v6.500h-1.600z" fill="#f3f3f3"/></svg>
<div class="t " style="left:1253px;top:106.5px;font-size:12.4px;line-height:19px;letter-spacing:0.6px;word-spacing:-1px;color:#262626;">정렬 및</div>
<div class="t " style="left:1258px;top:122px;font-size:12.4px;line-height:19px;letter-spacing:0.6px;word-spacing:-1px;color:#262626;">필터</div>
<svg class="i" style="left:1284px;top:126.5px" width="7" height="4" viewBox="0 0 7 4"><path d="M0.500 0.500h6l-3 3z" fill="#666"/></svg>
<svg class="i" style="left:1302px;top:72px" width="31" height="29" viewBox="0 0 31 29"><circle cx="19.300" cy="10.900" r="8.700" fill="#fff" stroke="#4a7ebb" stroke-width="2.400"/><path d="M12.500 18l-9.500 9.500" stroke="#3b78c4" stroke-width="3.200" stroke-linecap="round"/></svg>
<div class="t " style="left:1298px;top:106.5px;font-size:12.4px;line-height:19px;letter-spacing:0.6px;word-spacing:-1px;color:#262626;">찾기 및</div>
<div class="t " style="left:1302.5px;top:122px;font-size:12.4px;line-height:19px;letter-spacing:0.6px;word-spacing:-1px;color:#262626;">선택</div>
<svg class="i" style="left:1329px;top:126.5px" width="7" height="4" viewBox="0 0 7 4"><path d="M0.500 0.500h6l-3 3z" fill="#666"/></svg>
<div class="t " style="left:1237.5px;top:142px;font-size:12.4px;line-height:19px;letter-spacing:0.6px;word-spacing:-1px;color:#444;">편집</div>
<svg class="i" style="left:1420px;top:148px" width="12" height="7" viewBox="0 0 12 7"><path d="M.7 6l5-5 5 5" fill="none" stroke="#444" stroke-width="1.100"/></svg>
<div class="abs" style="left:6px;top:169px;width:102px;height:28px;background:#fff;border:1px solid #c6c6c6"></div>
<div class="t " style="left:13.5px;top:173.5px;font-size:14px;line-height:21px;letter-spacing:-0.4px;word-spacing:0px;color:#444;">B12</div>
<svg class="i" style="left:94px;top:180px" width="7" height="4" viewBox="0 0 7 4"><path d="M0 0h7l-3.500 4z" fill="#777"/></svg>
<div class="abs" style="left:122px;top:178px;width:2px;height:2px;background:#b0b0b0;"></div>
<div class="abs" style="left:122px;top:182px;width:2px;height:2px;background:#b0b0b0;"></div>
<div class="abs" style="left:122px;top:186px;width:2px;height:2px;background:#b0b0b0;"></div>
<div class="abs" style="left:138px;top:169px;width:110px;height:28px;background:#fff;border:1px solid #c6c6c6"></div>
<svg class="i" style="left:151px;top:178px" width="12" height="10" viewBox="0 0 12 10"><path d="M1 .5l9.500 9M10.500 .5l-9.500 9" stroke="#b4b4b4" stroke-width="1.300" fill="none"/></svg>
<svg class="i" style="left:186px;top:177px" width="14" height="12" viewBox="0 0 14 12"><path d="M1 7l3.500 4 8.500-10" stroke="#c4c4c4" stroke-width="1.800" fill="none"/></svg>
<div class="t " style="left:223px;top:172px;font-size:15px;line-height:22px;letter-spacing:0px;word-spacing:0px;color:#444;font-family:Liberation Serif,serif;font-weight:bold"><i>f</i><span style="font-size:11px;letter-spacing:0"><i>x</i></span></div>
<div class="abs" style="left:251px;top:169px;width:1183px;height:28px;background:#fff;border:1px solid #c6c6c6"></div>
<div class="t " style="left:264px;top:173.5px;font-size:14px;line-height:21px;letter-spacing:0px;word-spacing:0px;color:#444;">=</div>
<div class="abs blur" style="left:270px;top:170px;width:40px;height:20px"><i style="left:0;top:0;background:#f1efee"></i><i style="left:10px;top:0;background:#eeeeef"></i><i style="left:20px;top:0;background:#efeeee"></i><i style="left:30px;top:0;background:#eceef1"></i><i style="left:0;top:10px;background:#d6d6d6"></i><i style="left:10px;top:10px;background:#d3d3d5"></i><i style="left:20px;top:10px;background:#d6d6d6"></i><i style="left:30px;top:10px;background:#d4d4d4"></i></div>
<div class="t " style="left:310px;top:173.5px;font-size:14px;line-height:21px;letter-spacing:-0.15px;word-spacing:0px;color:#444;">_Code128B(B13)</div>
<svg class="i" style="left:1421px;top:180px" width="9" height="7" viewBox="0 0 9 7"><path d="M1 1l3.500 3.500 3.500-3.500" stroke="#666" stroke-width="1.800" fill="none"/></svg>
<div class="abs" style="left:49px;top:242px;width:705px;height:141px;background:#fff;"></div>
<div class="abs" style="left:50px;top:207px;width:245px;height:33px;background:#d2d2d2;"></div>
<div class="abs" style="left:48px;top:207px;width:2px;height:35px;background:#fff;"></div>
<div class="abs" style="left:130px;top:207px;width:1px;height:35px;background:#b0b0b0;"></div>
<div class="t" style="left:50px;top:208px;width:80px;text-align:center;font-size:23px;line-height:32px;color:#217346"><span style="display:inline-block;transform:scaleX(.84)">B</span></div>
<div class="abs" style="left:212px;top:207px;width:1px;height:35px;background:#b0b0b0;"></div>
<div class="t" style="left:131px;top:208px;width:81px;text-align:center;font-size:23px;line-height:32px;color:#217346"><span style="display:inline-block;transform:scaleX(.84)">C</span></div>
<div class="abs" style="left:294px;top:207px;width:1px;height:35px;background:#b0b0b0;"></div>
<div class="t" style="left:213px;top:208px;width:81px;text-align:center;font-size:23px;line-height:32px;color:#217346"><span style="display:inline-block;transform:scaleX(.84)">D</span></div>
<div class="abs" style="left:409px;top:207px;width:1px;height:35px;background:#a0a0a0;"></div>
<div class="t" style="left:295px;top:208px;width:114px;text-align:center;font-size:23px;line-height:32px;color:#000"><span style="display:inline-block;transform:scaleX(.84)">E</span></div>
<div class="abs" style="left:524px;top:207px;width:1px;height:35px;background:#a0a0a0;"></div>
<div class="t" style="left:410px;top:208px;width:114px;text-align:center;font-size:23px;line-height:32px;color:#000"><span style="display:inline-block;transform:scaleX(.84)">F</span></div>
<div class="abs" style="left:639px;top:207px;width:1px;height:35px;background:#a0a0a0;"></div>
<div class="t" style="left:525px;top:208px;width:114px;text-align:center;font-size:23px;line-height:32px;color:#000"><span style="display:inline-block;transform:scaleX(.84)">G</span></div>
<div class="abs" style="left:752px;top:207px;width:1px;height:35px;background:#a0a0a0;"></div>
<div class="t" style="left:640px;top:208px;width:112px;text-align:center;font-size:23px;line-height:32px;color:#000"><span style="display:inline-block;transform:scaleX(.84)">H</span></div>
<svg class="i" style="left:18px;top:211px" width="27" height="27" viewBox="0 0 27 27"><path d="M27 0v27h-27z" fill="#b4b4b4"/></svg>
<div class="abs" style="left:1px;top:241px;width:48px;height:1px;background:#a0a0a0;"></div>
<div class="abs" style="left:1px;top:242px;width:47px;height:29px;background:#e6e6e6;overflow:hidden"><div class="t" style="left:0;width:49px;bottom:1px;text-align:center;font-size:23px;line-height:32px;height:32px;color:#000"><span style="display:inline-block;transform:scaleX(.92)">9</span></div></div>
<div class="abs" style="left:1px;top:271px;width:47px;height:1px;background:#ababab;"></div>
<div class="abs" style="left:1px;top:272px;width:47px;height:15px;background:#e6e6e6;overflow:hidden"><div class="t" style="left:0;width:49px;bottom:1px;text-align:center;font-size:23px;line-height:32px;height:32px;color:#000"><span style="display:inline-block;transform:scaleX(.92)">10</span></div></div>
<div class="abs" style="left:1px;top:287px;width:47px;height:1px;background:#ababab;"></div>
<div class="abs" style="left:1px;top:288px;width:47px;height:15px;background:#e6e6e6;overflow:hidden"><div class="t" style="left:0;width:49px;bottom:1px;text-align:center;font-size:23px;line-height:32px;height:32px;color:#000"><span style="display:inline-block;transform:scaleX(.92)">11</span></div></div>
<div class="abs" style="left:1px;top:303px;width:47px;height:1px;background:#ababab;"></div>
<div class="abs" style="left:1px;top:304px;width:47px;height:53px;background:#d2d2d2;overflow:hidden"><div class="t" style="left:0;width:49px;bottom:1px;text-align:center;font-size:23px;line-height:32px;height:32px;color:#217346"><span style="display:inline-block;transform:scaleX(.92)">12</span></div></div>
<div class="abs" style="left:1px;top:357px;width:47px;height:1px;background:#ababab;"></div>
<div class="abs" style="left:1px;top:358px;width:47px;height:12px;background:#e6e6e6;overflow:hidden"><div class="t" style="left:0;width:49px;bottom:1px;text-align:center;font-size:23px;line-height:32px;height:32px;color:#000"><span style="display:inline-block;transform:scaleX(.92)">13</span></div></div>
<div class="abs" style="left:1px;top:370px;width:47px;height:1px;background:#ababab;"></div>
<div class="abs" style="left:1px;top:371px;width:47px;height:12px;background:#e6e6e6;overflow:hidden"><div class="t" style="left:0;width:49px;bottom:1px;text-align:center;font-size:23px;line-height:32px;height:32px;color:#000"><span style="display:inline-block;transform:scaleX(.92)">14</span></div></div>
<div class="abs" style="left:1px;top:383px;width:47px;height:1px;background:#ababab;"></div>
<div class="abs" style="left:48px;top:242px;width:1px;height:142px;background:#a0a0a0;"></div>
<div class="abs" style="left:47px;top:304px;width:2px;height:54px;background:#217346;"></div>
<div class="abs" style="left:49px;top:271px;width:706px;height:1px;background:#d4d4d4;"></div>
<div class="abs" style="left:49px;top:287px;width:706px;height:1px;background:#d4d4d4;"></div>
<div class="abs" style="left:49px;top:303px;width:706px;height:1px;background:#d4d4d4;"></div>
<div class="abs" style="left:49px;top:357px;width:706px;height:1px;background:#d4d4d4;"></div>
<div class="abs" style="left:49px;top:370px;width:706px;height:1px;background:#d4d4d4;"></div>
<div class="abs" style="left:49px;top:383px;width:706px;height:1px;background:#d4d4d4;"></div>
<div class="abs" style="left:130px;top:242px;width:1px;height:142px;background:#d4d4d4;"></div>
<div class="abs" style="left:212px;top:242px;width:1px;height:142px;background:#d4d4d4;"></div>
<div class="abs" style="left:294px;top:242px;width:1px;height:142px;background:#d4d4d4;"></div>
<div class="abs" style="left:409px;top:242px;width:1px;height:142px;background:#d4d4d4;"></div>
<div class="abs" style="left:524px;top:242px;width:1px;height:142px;background:#d4d4d4;"></div>
<div class="abs" style="left:639px;top:242px;width:1px;height:142px;background:#d4d4d4;"></div>
<div class="abs" style="left:754px;top:242px;width:1px;height:142px;background:#d4d4d4;"></div>
<div class="abs" style="left:130px;top:272px;width:164px;height:15px;background:#fff;"></div>
<div class="abs" style="left:130px;top:288px;width:164px;height:15px;background:#fff;"></div>
<div class="abs" style="left:130px;top:304px;width:164px;height:53px;background:#fff;"></div>
<div class="abs" style="left:130px;top:358px;width:164px;height:12px;background:#fff;"></div>
<div class="abs" style="left:130px;top:371px;width:164px;height:12px;background:#fff;"></div>
<div class="abs" style="left:524px;top:242px;width:1px;height:29px;background:#fff;"></div>
<div class="abs" style="left:524px;top:272px;width:1px;height:15px;background:#fff;"></div>
<div class="abs" style="left:524px;top:288px;width:1px;height:15px;background:#fff;"></div>
<div class="abs" style="left:639px;top:242px;width:1px;height:29px;background:#fff;"></div>
<div class="t " style="left:50px;top:271px;font-size:10.8px;line-height:16px;letter-spacing:0.3px;word-spacing:0px;color:#000;font-weight:bold;text-align:center;width:245px">레스쁘리 로즈 팝 카네이션</div>
<div class="t " style="left:50px;top:287px;font-size:10.8px;line-height:16px;letter-spacing:0.3px;word-spacing:0px;color:#000;font-weight:bold;text-align:center;width:245px">핑크 클린코튼 100ml</div>
<div class="t " style="left:50px;top:357px;font-size:10.8px;line-height:16px;letter-spacing:0.3px;word-spacing:0px;color:#000;font-weight:bold;text-align:center;width:245px">생산년월&nbsp; :&nbsp; 2019년&nbsp; 07월</div>
<div class="t " style="left:50px;top:369px;font-size:10.2px;line-height:15px;letter-spacing:0.2px;word-spacing:0px;color:#000;font-weight:bold;text-align:center;width:245px">자가검사 번호 : C-A09B-A303001-A150</div>
<svg class="i" style="left:64.9px;top:307px" width="223" height="37" viewBox="0 0 223 37"><rect x="0.00" y="0" width="2.50" height="37" fill="#000"/><rect x="3.75" y="0" width="1.25" height="37" fill="#000"/><rect x="7.50" y="0" width="1.25" height="37" fill="#000"/><rect x="15.00" y="0" width="3.75" height="37" fill="#000"/><rect x="20.00" y="0" width="1.25" height="37" fill="#000"/><rect x="23.75" y="0" width="2.50" height="37" fill="#000"/><rect x="30.00" y="0" width="3.75" height="37" fill="#000"/><rect x="35.00" y="0" width="1.25" height="37" fill="#000"/><rect x="38.75" y="0" width="2.50" height="37" fill="#000"/><rect x="45.00" y="0" width="1.25" height="37" fill="#000"/><rect x="48.75" y="0" width="3.75" height="37" fill="#000"/><rect x="53.75" y="0" width="2.50" height="37" fill="#000"/><rect x="60.00" y="0" width="3.75" height="37" fill="#000"/><rect x="66.25" y="0" width="1.25" height="37" fill="#000"/><rect x="68.75" y="0" width="2.50" height="37" fill="#000"/><rect x="75.00" y="0" width="1.25" height="37" fill="#000"/><rect x="78.75" y="0" width="3.75" height="37" fill="#000"/><rect x="85.00" y="0" width="2.50" height="37" fill="#000"/><rect x="90.00" y="0" width="2.50" height="37" fill="#000"/><rect x="95.00" y="0" width="1.25" height="37" fill="#000"/><rect x="97.50" y="0" width="3.75" height="37" fill="#000"/><rect x="105.00" y="0" width="2.50" height="37" fill="#000"/><rect x="108.75" y="0" width="3.75" height="37" fill="#000"/><rect x="115.00" y="0" width="1.25" height="37" fill="#000"/><rect x="120.00" y="0" width="2.50" height="37" fill="#000"/><rect x="123.75" y="0" width="3.75" height="37" fill="#000"/><rect x="130.00" y="0" width="1.25" height="37" fill="#000"/><rect x="135.00" y="0" width="2.50" height="37" fill="#000"/><rect x="140.00" y="0" width="3.75" height="37" fill="#000"/><rect x="145.00" y="0" width="1.25" height="37" fill="#000"/><rect x="150.00" y="0" width="3.75" height="37" fill="#000"/><rect x="155.00" y="0" width="1.25" height="37" fill="#000"/><rect x="158.75" y="0" width="2.50" height="37" fill="#000"/><rect x="165.00" y="0" width="2.50" height="37" fill="#000"/><rect x="170.00" y="0" width="1.25" height="37" fill="#000"/><rect x="173.75" y="0" width="3.75" height="37" fill="#000"/><rect x="180.00" y="0" width="2.50" height="37" fill="#000"/><rect x="185.00" y="0" width="3.75" height="37" fill="#000"/><rect x="191.25" y="0" width="1.25" height="37" fill="#000"/><rect x="195.00" y="0" width="2.50" height="37" fill="#000"/><rect x="200.00" y="0" width="1.25" height="37" fill="#000"/><rect x="203.75" y="0" width="3.75" height="37" fill="#000"/><rect x="210.10" y="0" width="0.60" height="37" fill="#000"/><rect x="211.40" y="0" width="4.80" height="37" fill="#000"/><rect x="219.20" y="0" width="2.70" height="37" fill="#000"/></svg>
<div class="t" style="left:84px;top:345px;width:200px;font-size:11.5px;line-height:12px;letter-spacing:8.650px;color:#1a1a1a;font-family:Liberation Sans,sans-serif">8809135568424</div>
<div class="abs" style="left:47px;top:302px;width:249px;height:57px;background:transparent;border:2px solid #217346"></div>
<div class="abs" style="left:291px;top:353px;width:7px;height:7px;background:#fff;"></div>
<div class="abs" style="left:292px;top:354px;width:5px;height:5px;background:#217346;"></div>
<div class="t " style="left:412.5px;top:247px;font-size:13.6px;line-height:20px;letter-spacing:0.45px;word-spacing:0px;color:#000;">1. 인쇄하기 전에 프린트를 <b>TDP-247</b>로 설정해주세요.</div>
<div class="t " style="left:412.5px;top:271.5px;font-size:13.6px;line-height:20px;letter-spacing:0.45px;word-spacing:0px;color:#000;">2. 프린트 설정 <b>"편집"</b>에서 인쇄 크기를</div>
<div class="t " style="left:427.5px;top:287.3px;font-size:13.6px;line-height:20px;letter-spacing:0.45px;word-spacing:0px;color:#000;"><b>40mm x 25mm</b>로 해주세요.</div>
<div class="abs" style="left:301px;top:241px;width:103px;height:135px;background:#fff;border:4px solid #f79646;border-radius:18px"></div>
<div class="t " style="left:330px;top:293px;font-size:24px;line-height:36px;letter-spacing:0px;word-spacing:0px;color:#000;">시작</div>
<div class="abs" style="left:431px;top:308px;width:122.5px;height:74.5px;background:#9bbb59;border:4px solid #71893f;border-radius:15px"></div>
<div class="abs" style="left:577px;top:306px;width:122.5px;height:74.5px;background:#9bbb59;border:4px solid #71893f;border-radius:15px"></div>
<div class="t " style="left:431px;top:327px;font-size:13.3px;line-height:20px;letter-spacing:0px;word-spacing:0px;color:#fff;width:122.500px;text-align:center">쿠팡 발주서</div>
<div class="t " style="left:431px;top:348.5px;font-size:13.3px;line-height:20px;letter-spacing:0px;word-spacing:0px;color:#fff;width:122.500px;text-align:center">다운로드</div>
<div class="t " style="left:577px;top:335px;font-size:13.3px;line-height:20px;letter-spacing:0px;word-spacing:0px;color:#fff;width:122.500px;text-align:center">시트삭제</div>
<div class="abs" style="left:295px;top:241px;width:460px;height:1px;background:#a0a0a0;"></div>
<div class="abs" style="left:50px;top:240px;width:245px;height:2px;background:#217346;"></div>
<div class="abs" style="left:1417px;top:241px;width:1px;height:499px;background:#ababab;"></div>
<div class="abs" style="left:0px;top:739px;width:1418px;height:1px;background:#ababab;"></div>
<div class="abs" style="left:1421px;top:209px;width:15px;height:531px;background:#dadada;"></div>
<div class="abs" style="left:1421px;top:209px;width:15px;height:15px;background:#fff;border:1px solid #ababab"></div>
<svg class="i" style="left:1425px;top:214px" width="7" height="4" viewBox="0 0 7 4"><path d="M0 4l3.500-4 3.500 4z" fill="#666"/></svg>
<div class="abs" style="left:1421px;top:250px;width:15px;height:475px;background:#fff;border:1px solid #ababab"></div>
<div class="abs" style="left:1421px;top:725px;width:15px;height:15px;background:#fff;border:1px solid #ababab"></div>
<svg class="i" style="left:1425px;top:731px" width="7" height="4" viewBox="0 0 7 4"><path d="M0 0l3.500 4 3.500-4z" fill="#666"/></svg>
<div class="abs" style="left:449px;top:398px;width:350px;height:146px;border:1px solid #2f2f2f;border-radius:6px 6px 2px 2px;background:linear-gradient(#97b3d5,#a6c0de 12px,#bcd4ee 28px,#b9d1ea 40px,#b9d1ea)">
<div class="abs" style="left:0;top:0;right:0;bottom:0;border:1px solid rgba(255,255,255,.8);border-right-color:#7fd6f2;border-bottom-color:#9fdcf2;border-radius:5px 5px 1px 1px"></div>
<div class="abs" style="left:7px;top:29px;width:335px;height:109px;background:#f0f0f0"></div>
</div>
<div class="t " style="left:462px;top:409px;font-size:12px;line-height:18px;letter-spacing:0.6px;word-spacing:0px;color:#000;">인쇄 중</div>
<div class="abs" style="left:725.5px;top:408.5px;width:30px;height:16px;background:linear-gradient(#c9daee,#b7cce5 45%,#9fb9d8 50%,#b4cbe5);border:1px solid #5f7da3;border-radius:3px;box-shadow:inset 0 0 0 1px rgba(255,255,255,.45)"></div>
<svg class="i" style="left:736px;top:411px" width="9" height="11" viewBox="0 0 9 11"><text x="4.500" y="9.500" text-anchor="middle" font-size="11.500" font-weight="bold" font-family="Liberation Sans,sans-serif" fill="#fff" stroke="#3b3b3b" stroke-width="1.600" paint-order="stroke">?</text></svg>
<div class="abs" style="left:758px;top:408.5px;width:31px;height:16px;background:linear-gradient(#e8b3a6,#d8836f 45%,#c4452d 50%,#cf6a50);border:1px solid #5a2424;border-radius:3px;box-shadow:inset 0 0 0 1px rgba(255,255,255,.3)"></div>
<svg class="i" style="left:768px;top:411.5px" width="11" height="10" viewBox="0 0 11 10"><path d="M1.800 1.500l7.400 7M9.200 1.500l-7.400 7" stroke="#3d3d3d" stroke-width="3.600" fill="none"/><path d="M1.800 1.500l7.400 7M9.200 1.500l-7.400 7" stroke="#fff" stroke-width="2.100" fill="none"/></svg>
<div class="abs blur" style="left:460px;top:450px;width:260px;height:20px"><i style="left:0px;top:0;background:rgb(228,228,228)"></i><i style="left:0px;top:10px;background:rgb(192,190,191)"></i><i style="left:10px;top:0;background:rgb(228,228,228)"></i><i style="left:10px;top:10px;background:rgb(204,202,203)"></i><i style="left:20px;top:0;background:rgb(226,226,226)"></i><i style="left:20px;top:10px;background:rgb(192,190,191)"></i><i style="left:30px;top:0;background:rgb(224,224,224)"></i><i style="left:30px;top:10px;background:rgb(188,186,187)"></i><i style="left:40px;top:0;background:rgb(230,230,230)"></i><i style="left:40px;top:10px;background:rgb(192,190,191)"></i><i style="left:50px;top:0;background:rgb(232,232,232)"></i><i style="left:50px;top:10px;background:rgb(188,186,187)"></i><i style="left:60px;top:0;background:rgb(230,230,230)"></i><i style="left:60px;top:10px;background:rgb(210,208,209)"></i><i style="left:70px;top:0;background:rgb(234,234,234)"></i><i style="left:70px;top:10px;background:rgb(200,198,199)"></i><i style="left:80px;top:0;background:rgb(228,228,228)"></i><i style="left:80px;top:10px;background:rgb(188,186,187)"></i><i style="left:90px;top:0;background:rgb(234,234,234)"></i><i style="left:90px;top:10px;background:rgb(210,208,209)"></i><i style="left:100px;top:0;background:rgb(231,231,231)"></i><i style="left:100px;top:10px;background:rgb(196,194,195)"></i><i style="left:110px;top:0;background:rgb(230,230,230)"></i><i style="left:110px;top:10px;background:rgb(210,208,209)"></i><i style="left:120px;top:0;background:rgb(226,226,226)"></i><i style="left:120px;top:10px;background:rgb(204,202,203)"></i><i style="left:130px;top:0;background:rgb(234,234,234)"></i><i style="left:130px;top:10px;background:rgb(210,208,209)"></i><i style="left:140px;top:0;background:rgb(231,231,231)"></i><i style="left:140px;top:10px;background:rgb(192,190,191)"></i><i style="left:150px;top:0;background:rgb(232,232,232)"></i><i style="left:150px;top:10px;background:rgb(192,190,191)"></i><i style="left:160px;top:0;background:rgb(234,234,234)"></i><i style="left:160px;top:10px;background:rgb(204,202,203)"></i><i style="left:170px;top:0;background:rgb(234,234,234)"></i><i style="left:170px;top:10px;background:rgb(204,202,203)"></i><i style="left:180px;top:0;background:rgb(224,224,224)"></i><i style="left:180px;top:10px;background:rgb(180,178,179)"></i><i style="left:190px;top:0;background:rgb(228,228,228)"></i><i style="left:190px;top:10px;background:rgb(210,208,209)"></i><i style="left:200px;top:0;background:rgb(224,224,224)"></i><i style="left:200px;top:10px;background:rgb(196,194,195)"></i><i style="left:210px;top:0;background:rgb(228,228,228)"></i><i style="left:210px;top:10px;background:rgb(180,178,179)"></i><i style="left:220px;top:0;background:rgb(228,228,228)"></i><i style="left:220px;top:10px;background:rgb(196,194,195)"></i><i style="left:230px;top:0;background:rgb(224,224,224)"></i><i style="left:230px;top:10px;background:rgb(180,178,179)"></i><i style="left:240px;top:0;background:rgb(232,232,232)"></i><i style="left:240px;top:10px;background:rgb(204,202,203)"></i><i style="left:250px;top:0;background:rgb(234,234,234)"></i><i style="left:250px;top:10px;background:rgb(180,178,179)"></i></div>
<div class="t " style="left:457px;top:435.7px;font-size:12px;line-height:18px;letter-spacing:0.75px;word-spacing:0px;color:#000;width:334px;text-align:center">1 페이지 중 1 페이지를 인쇄하고 있습니다.</div>
<div class="t " style="left:720px;top:454px;font-size:12px;line-height:18px;letter-spacing:0.55px;word-spacing:0px;color:#000;">xlsm'을(를)</div>
<div class="t " style="left:457px;top:473.7px;font-size:12px;line-height:18px;letter-spacing:0.75px;word-spacing:0px;color:#000;width:334px;text-align:center">인쇄하고 있습니다.</div>
<div class="abs" style="left:586.5px;top:502.5px;width:73px;height:24px;background:linear-gradient(#f2f2f2,#ebebeb 48%,#dddddd 52%,#cfcfcf);border:1px solid #3c7fb1;border-radius:3px;box-shadow:inset 0 0 0 1px #5fd3f3"></div>
<div class="abs" style="left:589.5px;top:505.5px;width:67px;height:18px;background:transparent;border:1px dotted #000"></div>
<div class="t " style="left:586.5px;top:507px;font-size:12px;line-height:18px;letter-spacing:0.5px;word-spacing:0px;color:#000;width:73px;text-align:center">취소</div>
<div class="abs" style="left:1px;top:740px;width:1438px;height:27px;background:#e6e6e6;"></div>
<div class="abs" style="left:1px;top:767px;width:1438px;height:1px;background:#d0d0d0;"></div>
<div class="abs" style="left:1px;top:768px;width:1438px;height:21px;background:#f3f3f3;"></div>
<svg class="i" style="left:27.5px;top:748.5px" width="4.5" height="8" viewBox="0 0 4.5 8"><path d="M4.500 0v8l-4.500-4z" fill="#217346"/></svg>
<svg class="i" style="left:56px;top:748.5px" width="4.5" height="8" viewBox="0 0 4.5 8"><path d="M0 0v8l4.500-4z" fill="#c0c0c0"/></svg>
<div class="t " style="left:81px;top:741.5px;font-size:13px;line-height:20px;letter-spacing:0.3px;word-spacing:0px;color:#217346;font-weight:bold">...</div>
<div class="abs" style="left:101px;top:743px;width:1px;height:20px;background:#ababab;"></div>
<div class="abs" style="left:157px;top:743px;width:1px;height:20px;background:#ababab;"></div>
<div class="abs" style="left:300px;top:743px;width:1px;height:20px;background:#ababab;"></div>
<div class="abs" style="left:420px;top:743px;width:1px;height:20px;background:#ababab;"></div>
<div class="abs" style="left:540px;top:743px;width:1px;height:20px;background:#ababab;"></div>
<div class="t " style="left:114px;top:742.5px;font-size:13px;line-height:20px;letter-spacing:0px;word-spacing:0px;color:#444;">Form</div>
<div class="abs" style="left:160px;top:742px;width:138px;height:22px;background:#9c4a09;"></div>
<div class="t " style="left:170px;top:742.5px;font-size:13.2px;line-height:20px;letter-spacing:0.9px;word-spacing:0px;color:#fff;">오일라벨 (정보입력)</div>
<div class="t " style="left:312.5px;top:742.5px;font-size:13.2px;line-height:20px;letter-spacing:0.9px;word-spacing:0px;color:#444;">향기로운 페이지</div>
<div class="t " style="left:432.5px;top:742.5px;font-size:13.2px;line-height:20px;letter-spacing:0.9px;word-spacing:0px;color:#444;">향기로운 데이타</div>
<div class="t " style="left:553px;top:742.5px;font-size:13.5px;line-height:20px;letter-spacing:0px;word-spacing:0px;color:#444;">DATA</div>
<div class="abs" style="left:600px;top:739px;width:118px;height:25px;background:#fff;border-left:1px solid #ababab;border-right:1px solid #ababab"></div>
<div class="abs" style="left:600px;top:762px;width:118px;height:2px;background:#217346;"></div>
<div class="t " style="left:613px;top:742.5px;font-size:13.2px;line-height:20px;letter-spacing:0.9px;word-spacing:0px;color:#217346;">프린트 (바코드)</div>
<svg class="i" style="left:749px;top:744px" width="18" height="18" viewBox="0 0 18 18"><circle cx="9" cy="9" r="7.500" fill="none" stroke="#777" stroke-width="1.200"/><path d="M9 5v8M5 9h8" stroke="#666" stroke-width="1.600"/></svg>
<div class="abs" style="left:864px;top:748px;width:2px;height:2px;background:#a0a0a0;"></div>
<div class="abs" style="left:864px;top:752px;width:2px;height:2px;background:#a0a0a0;"></div>
<div class="abs" style="left:864px;top:756px;width:2px;height:2px;background:#a0a0a0;"></div>
<div class="abs" style="left:881px;top:746px;width:537px;height:15px;background:#fff;border:1px solid #ababab"></div>
<div class="abs" style="left:895px;top:746px;width:3px;height:15px;background:#e6e6e6;border-left:1px solid #ababab;border-right:1px solid #ababab"></div>
<svg class="i" style="left:886px;top:750px" width="4" height="7" viewBox="0 0 4 7"><path d="M4 0v7l-4-3.500z" fill="#444"/></svg>
<div class="abs" style="left:1403px;top:746px;width:1px;height:15px;background:#ababab;"></div>
<svg class="i" style="left:1408px;top:750px" width="4" height="7" viewBox="0 0 4 7"><path d="M0 0v7l4-3.500z" fill="#444"/></svg>
<div class="abs" style="left:1138px;top:768px;width:38px;height:21px;background:#c6c6c6;"></div>
<svg class="i" style="left:1150px;top:771px" width="14" height="14" viewBox="0 0 14 14"><path d="M.5 .5h12v12h-12z M4.500 .5v12M8.500 .5v12M.5 4.500h12M.5 8.500h12" fill="none" stroke="#555" stroke-width="1"/></svg>
<svg class="i" style="left:1188px;top:771px" width="15" height="14" viewBox="0 0 15 14"><path d="M.5 .5h13v12h-13z" fill="none" stroke="#555"/><path d="M3.500 2.500h7v8h-7z M5 4.500h4M5 6.500h4M5 8.500h4" fill="none" stroke="#555" stroke-width="1"/></svg>
<svg class="i" style="left:1226px;top:771px" width="15" height="14" viewBox="0 0 15 14"><path d="M.5 .5h13v12h-13z M4.500 .5v6.500h5v-6.500 M.5 7h13" fill="none" stroke="#555" stroke-width="1"/></svg>
<div class="abs" style="left:1257px;top:778px;width:6px;height:2px;background:#444;"></div>
<div class="abs" style="left:1267px;top:778px;width:100px;height:1px;background:#ababab;"></div>
<div class="abs" style="left:1317px;top:775px;width:1px;height:7px;background:#ababab;"></div>
<div class="abs" style="left:1324px;top:772px;width:5px;height:11px;background:#777;"></div>
<div class="abs" style="left:1371px;top:778px;width:7px;height:1.5px;background:#444;"></div>
<div class="abs" style="left:1373.75px;top:775.25px;width:1.5px;height:7px;background:#444;"></div>
<div class="t " style="left:1389px;top:769.5px;font-size:12.5px;line-height:19px;letter-spacing:0px;word-spacing:0px;color:#444;">160%</div>
<div class="abs bl"></div><div class="abs br"></div><div class="abs bb"></div>
</body>
</html>
